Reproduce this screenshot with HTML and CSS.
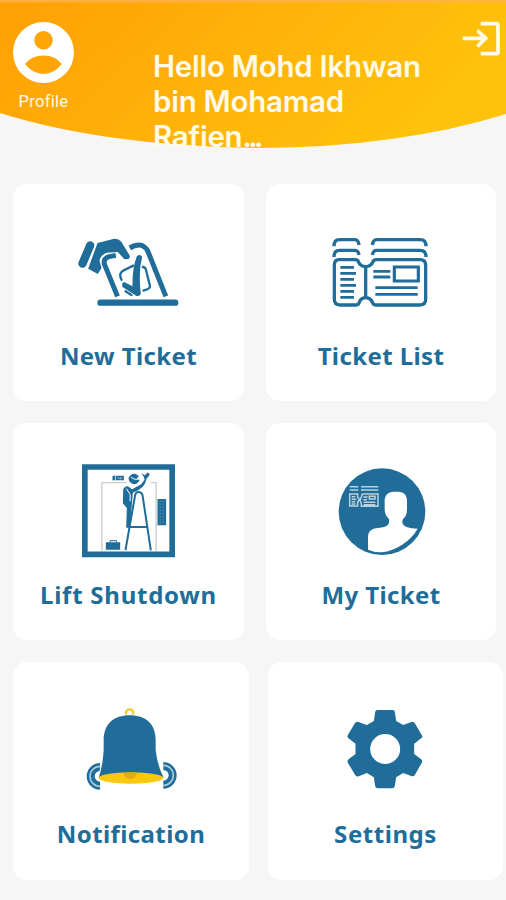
FILE: index.html
```html
<!DOCTYPE html>
<html lang="en">
<head>
<meta charset="utf-8">
<title>Home</title>
<link rel="stylesheet" href="styles.css">
</head>
<body>
<header class="header">
  <svg class="header-bg" viewBox="0 0 506 149" aria-hidden="true">
    <defs>
      <linearGradient id="sun" x1="0" y1="0" x2="1" y2=".3"><stop offset="0" stop-color="#ff9f05"/><stop offset=".5" stop-color="#ffb109"/><stop offset="1" stop-color="#ffc20b"/></linearGradient>
      <linearGradient id="edge" x1="0" y1="0" x2="0" y2="1"><stop offset="0" stop-color="#ffb34d"/><stop offset="1" stop-color="#ffb34d" stop-opacity="0"/></linearGradient>
    </defs>
    <path fill="url(#sun)" d="M0 0H506V114Q400 147 260 148Q105 146 0 113Z"/>
    <path fill="url(#edge)" d="M0 0H506V4H0Z"/>
  </svg>
  <a class="profile">
    <svg class="avatar" viewBox="0 0 184 184"><circle cx="92" cy="92" r="92" fill="#fff"/><circle cx="92" cy="55" r="28" fill="#ffa506"/><path fill="#ffa506" d="M36 127Q55 101 92 101T147 127Q125 157 92 157T36 127Z"/></svg>
    <span class="profile-label">Profile</span>
  </a>
  <h1 class="greeting">Hello Mohd Ikhwan<br>bin Mohamad<br>Rafien<span class="dots">...</span></h1>
  <svg class="logout" viewBox="0 0 114 106" fill="none" stroke="#fffbe8" stroke-width="11"><path d="M56 8H104Q108 8 108 12V94Q108 98 104 98H56M2 52H72M46 28L71 52L46 76"/></svg>
</header>

<main class="menu">
  <div class="row">
    <a class="tile">
      <svg class="icon" viewBox="-3.5 0 480 300">
        <g fill="none" stroke="#206d99" stroke-linecap="round" stroke-linejoin="round">
          <path stroke-width="19" d="M151 233H375"/>
          <path stroke-width="25" d="M120 61L97 116"/>
          <path stroke-width="15" stroke-linecap="butt" d="M197 91L177 95Q158 101 163 118L202 214M239 69Q266 53 283 66Q290 71 294 81L347 214"/>
          <path stroke-width="7" d="M249 122L219 137Q207 144 211 157L214 164M278 126Q284 126 287 133L298 177Q302 188 293 192L280 197M226 199L244 210"/>
        </g>
        <path fill="#206d99" d="M222 171L247 184Q246 128 260 94Q269 85 276 95Q264 142 272 207Q267 215 259 213L217 186Q213 173 222 171Z"/>
        <path fill="#206d99" d="M142 54L192 41Q207 41 214 51L238 91Q242 101 231 103L222 102L203 81L169 83Q151 91 148 107L154 129L143 147L114 131Z"/>
      </svg>
      <span class="label">New Ticket</span>
    </a>
    <a class="tile">
      <svg class="icon" viewBox="-12 0 480 300" fill="none" stroke="#206d99" stroke-width="10">
        <path d="M102 104H150Q159 104 161 112Q166 124 182 125Q198 124 203 112Q206 104 213 104H345Q362 104 362 121V223Q362 240 345 240H211Q203 238 201 229Q195 218 182 218Q169 218 164 229Q161 240 154 240H105Q88 240 88 223V121Q88 104 102 104ZM182 128V216"/>
        <path d="M87 96Q87 76 103 76H150Q160 76 162 90M202 90Q205 76 214 76H346Q363 76 363 96M87 64Q87 44 103 44H150Q160 44 162 60M202 60Q205 44 214 44H346Q363 44 363 64"/>
        <path stroke-width="8.5" d="M106 127H147M106 145H153M106 163H147M106 181H153M106 199H147M106 217H147M205 139H256M205 156H256M211 188H338M211 208H338"/>
        <path stroke-width="9.5" d="M268 126H340V168H268Z"/>
      </svg>
      <span class="label">Ticket List</span>
    </a>
  </div>

  <div class="row">
    <a class="tile">
      <svg class="icon" viewBox="57.5 27 480 300">
        <path fill="none" stroke="#206d99" stroke-width="17" d="M165 36H427V298H165Z"/>
        <path fill="none" stroke="#c9ceca" stroke-width="4" d="M216 288V83H290M362 83H379V288"/>
        <path fill="#206d99" d="M248 62H282V76H248ZM383 132H409V211H383ZM228 262H271V284H228Z"/>
        <path fill="none" stroke="#fff" stroke-width="2" d="M257 63V75M264 66L269 72M273 66V73"/>
        <path fill="none" stroke="#78a7bf" stroke-width="2" stroke-dasharray="5 4" d="M391 137V208M400 137V208"/>
        <path fill="none" stroke="#206d99" stroke-width="3" d="M241 262V257H260V262"/>
        <path fill="none" stroke="#206d99" stroke-width="6" d="M287 285L316 120Q318 111 326 111Q335 111 338 120L363 286M298 216H352"/>
        <path fill="#206d99" d="M296 70Q300 56 316 56L328 63L321 70L329 75Q325 87 312 88Q298 85 296 70ZM280 105Q282 94 294 94L307 103L334 88L344 74L342 65L334 55L345 61L354 52L360 59L350 71L346 85Q340 98 326 105L309 113L306 150L300 218H289L291 159L279 145Z"/>
        <path fill="none" stroke="#fff" stroke-width="3" d="M304 67Q312 75 326 73M290 101L301 119V139"/>
      </svg>
      <span class="label lift">Lift Shutdown</span>
    </a>
    <a class="tile">
      <svg class="icon" viewBox="-12 27 480 300">
        <circle cx="231" cy="170" r="130" fill="#206d99"/>
        <path fill="#fff" d="M189 292V244Q190 221 218 219Q245 217 251 206Q255 195 250 190Q240 180 239 165V133Q241 112 265 110H282Q304 111 306 134V164Q305 182 296 190Q290 196 293 206Q298 219 338 221C315 260 273 287 231 292Q209 293 189 284Z"/>
        <g fill="none" stroke="#b8d1df" stroke-width="4.5"><path d="M134 95H160M168 95H220M134 105H160M168 105H220M134 117H158V126L163 133L158 141V153H134ZM172 117H219V154H169V145L165 137L169 126ZM140 125H151M140 133H154M140 140H151M140 147H151M175 126H188M175 134H186M176 142H211M176 149H211"/><path d="M193 124H210V132H193Z"/></g>
      </svg>
      <span class="label">My Ticket</span>
    </a>
  </div>

  <div class="row wide">
    <a class="tile">
      <svg class="icon" viewBox="3 9 480 300">
        <circle cx="239" cy="39" r="11" fill="none" stroke="#f0c928" stroke-width="7"/>
        <path fill="none" stroke="#206d99" stroke-width="24" d="M150 201A28 28 0 0 0 150 257M340 198A28 28 0 0 1 340 254"/>
        <path fill="none" stroke="#a7cbdc" stroke-width="5" d="M150 199A30 30 0 0 0 150 259M340 196A30 30 0 0 1 340 256"/>
        <path fill="#206d99" stroke="#fff" stroke-width="7" paint-order="stroke" d="M146 233Q158 200 161 150V120C162 72 191 46 239 46S317 72 317 120V150Q323 200 341 233Z"/>
        <ellipse cx="243" cy="234" rx="97" ry="17" fill="#f9c80f"/>
        <path fill="#e5a817" d="M222 219Q241 215 260 219Q260 236 241 237Q222 236 222 219Z"/>
      </svg>
      <span class="label">Notification</span>
    </a>
    <a class="tile">
      <svg class="icon" viewBox="-43.5 9 480 300">
        <path fill="#206d99" fill-rule="evenodd" d="M170 30H217Q222 30 223 36L227 63L248 75L273 66Q279 64 283 70L305 107Q307 111 302 115L281 131V162L302 178Q307 182 304 188L283 225Q279 231 272 228L248 219L227 232L223 258Q222 265 215 265H172Q165 265 164 258L160 232L139 219L115 229Q108 231 104 225L82 188Q79 182 84 178L105 162V131L84 115Q79 111 82 105L103 70Q107 64 114 66L139 75L160 63L164 36Q165 30 170 30ZM194 102A45 45 0 1 0 194 192A45 45 0 1 0 194 102Z"/>
      </svg>
      <span class="label set">Settings</span>
    </a>
  </div>
</main>
</body>
</html>
```
FILE: styles.css
```css
* { box-sizing: border-box; }
body {
  margin: 0;
  width: 506px;
  height: 900px;
  overflow: hidden;
  background: #f6f6f6;
  font-family: "Noto Sans", sans-serif;
}
.header {
  position: relative;
  display: flex;
  align-items: flex-start;
  height: 149px;
  color: #fffbe8;
}
.header-bg {
  position: absolute;
  inset: 0;
  width: 506px;
  height: 149px;
  z-index: -1;
}
.profile {
  display: flex;
  flex-direction: column;
  align-items: center;
  width: 61px;
  margin: 22px 0 0 13px;
}
.avatar { width: 61px; height: 61px; }
.profile-label {
  margin-top: 9px;
  font: 16.5px/20px Roboto, sans-serif;
  letter-spacing: .3px;
}
.greeting {
  margin: 49px 0 0 79px;
  width: 309px;
  flex: none;
  font: 600 29.5px/35px Inter, sans-serif;
  letter-spacing: -.25px;
  white-space: nowrap;
}
.dots { letter-spacing: -3.6px; }
.logout { width: 38px; height: 35.3px; margin-top: 21px; flex: none; }
.menu {
  display: flex;
  flex-direction: column;
  gap: 22px;
  padding: 35px 3px 0 13px;
}
.row {
  display: grid;
  grid-template-columns: 231px 230px;
  column-gap: 22px;
  height: 217px;
}
.wide {
  grid-template-columns: 236px 235px;
  column-gap: 19px;
  height: 218px;
}
.tile {
  display: flex;
  flex-direction: column;
  align-items: center;
  padding-top: 41px;
  border-radius: 14px;
  background: #fff;
}
.icon { width: 160px; height: 100px; flex: none; }
.label {
  margin-top: 15px;
  color: #206d99;
  font-size: 24px;
  font-weight: 700;
  line-height: 32px;
  letter-spacing: .4px;
  white-space: nowrap;
}
.lift { letter-spacing: .75px; }
.set { letter-spacing: .55px; }
```
